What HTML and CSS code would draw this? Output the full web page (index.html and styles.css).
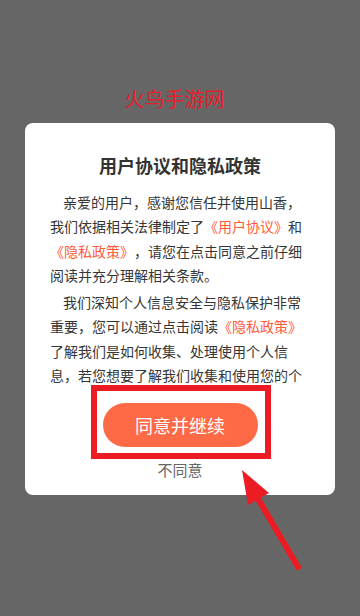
FILE: index.html
```html
<!DOCTYPE html>
<html lang="zh-CN">
<head>
<meta charset="utf-8">
<title>用户协议和隐私政策</title>
<link rel="stylesheet" href="styles.css">
</head>
<body>
<div class="screen">
  <div class="watermark">火鸟手游网</div>
  <div class="card">
    <h1 class="title">用户协议和隐私政策</h1>
    <div class="content">
      <p class="para">亲爱的用户，感谢您信任并使用山香，我们依据相关法律制定了<span class="link">《用户协议》</span>和<span class="link">《隐私政策》</span>，请您在点击同意之前仔细阅读并充分理解相关条款。</p>
      <p class="para">我们深知个人信息安全与隐私保护非常重要，您可以通过点击阅读<span class="link">《隐私政策》</span>了解我们是如何收集、处理使用个人信息，若您想要了解我们收集和使用您的个</p>
    </div>
    <div class="actions">
      <div class="btn-wrap">
        <button class="agree">同意并继续</button>
        <div class="highlight"></div>
      </div>
      <div class="disagree">不同意</div>
    </div>
  </div>
  <svg class="arrow" width="360" height="616" viewBox="0 0 360 616">
    <line x1="298" y1="567" x2="254" y2="492" stroke="#ec1c24" stroke-width="6" stroke-linecap="round"/>
    <polygon points="242,470 269,493 248,505" fill="#ec1c24"/>
  </svg>
</div>
</body>
</html>
```

FILE: styles.css
```css
html, body {
  margin: 0;
  padding: 0;
}
body {
  background: #666666;
  font-family: "Noto Sans CJK SC", "Noto Sans", sans-serif;
}
.screen {
  position: relative;
  width: 360px;
  height: 616px;
  display: flex;
  flex-direction: column;
  align-items: center;
  padding-top: 123px;
  box-sizing: border-box;
  overflow: hidden;
}
.watermark {
  position: absolute;
  left: 0;
  right: 0;
  top: 86px;
  text-align: center;
  font-size: 20px;
  line-height: 26px;
  color: #e3202c;
  margin-left: -11px;
}
.card {
  width: 310px;
  box-sizing: border-box;
  background: #ffffff;
  border-radius: 8px;
  padding: 30px 25px 15px 25px;
  display: flex;
  flex-direction: column;
}
.title {
  margin: 0;
  font-size: 18px;
  line-height: 24px;
  font-weight: 700;
  color: #333333;
  text-align: center;
}
.content {
  margin-top: 13px;
  display: flex;
  flex-direction: column;
  gap: 3px;
}
.para {
  margin: 0;
  font-size: 14px;
  line-height: 24.3px;
  color: #363636;
  text-indent: 13px;
  text-spacing-trim: space-all;
  font-feature-settings: "fwid" 1;
}
.link {
  color: #ff5b39;
}
.actions {
  display: flex;
  flex-direction: column;
  align-items: center;
  margin-top: 16px;
}
.btn-wrap {
  position: relative;
  display: flex;
}
.agree {
  width: 155px;
  height: 44px;
  border: none;
  border-radius: 22px;
  background: #fd6a45;
  color: #ffffff;
  font-family: "Noto Sans CJK SC", "Noto Sans", sans-serif;
  font-size: 18px;
  padding: 0;
}
.highlight {
  position: absolute;
  left: -12px;
  top: -18px;
  right: -13px;
  bottom: -12px;
  border: 6px solid #ec1c24;
  box-sizing: border-box;
}
.disagree {
  margin-top: 13px;
  font-size: 15px;
  line-height: 20px;
  color: #666666;
}
.arrow {
  position: absolute;
  left: 0;
  top: 0;
  pointer-events: none;
}
```
